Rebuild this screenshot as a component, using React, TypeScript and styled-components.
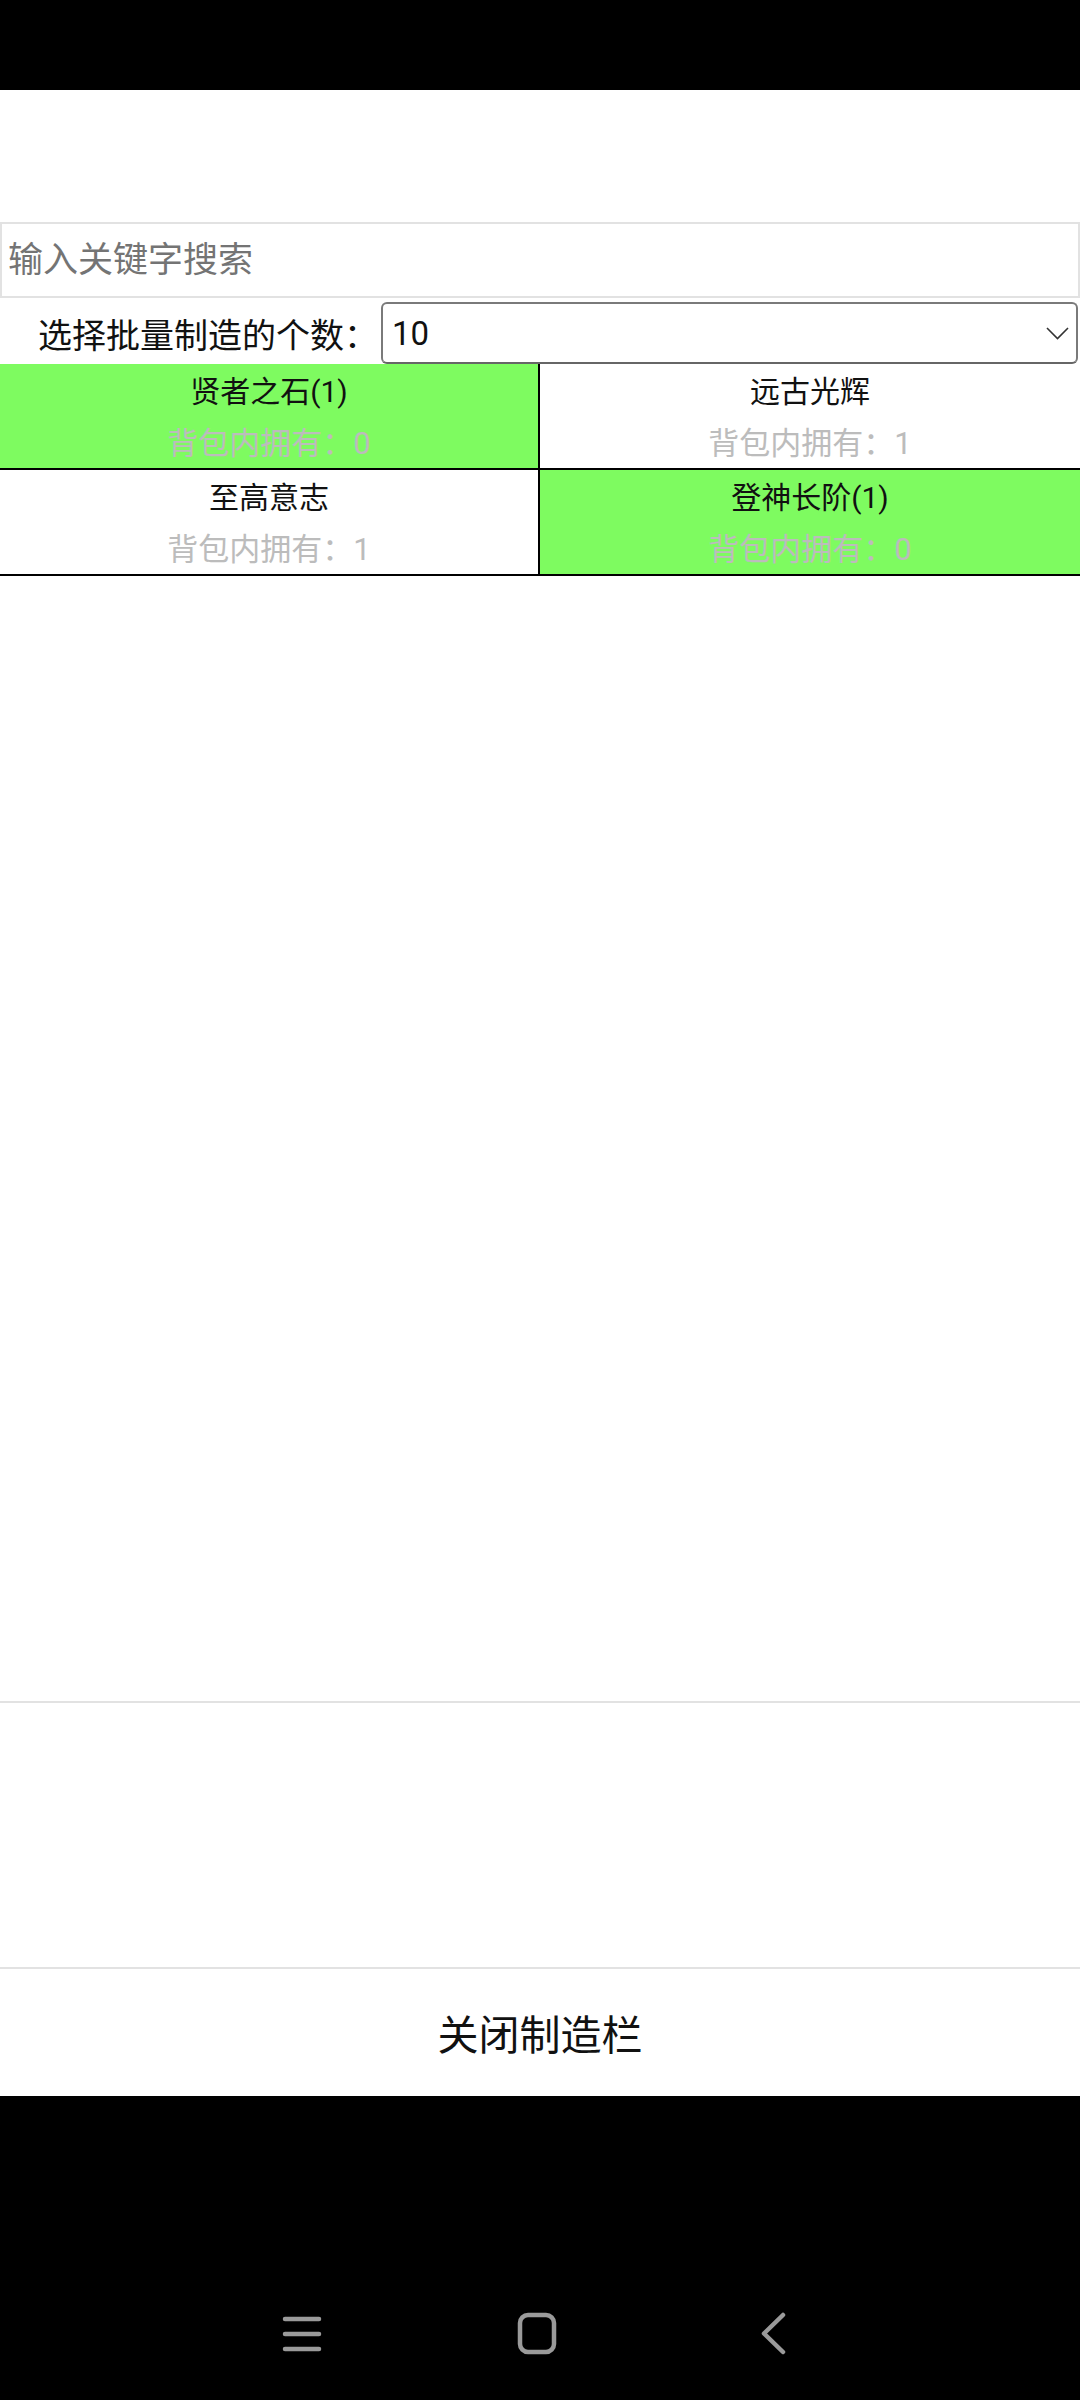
import React from "react";
import styled, { createGlobalStyle } from "styled-components";

const Global = createGlobalStyle`
  html, body { margin: 0; padding: 0; background: #000; }
  body { font-family: Roboto, "Noto Sans CJK SC", sans-serif; }
  * { box-sizing: border-box; }
`;

const Screen = styled.div`
  width: 1080px;
  height: 2400px;
  display: flex;
  flex-direction: column;
  background: #fff;
`;

const StatusBar = styled.div`
  height: 90px;
  background: #000;
  flex: none;
`;

const TopSpace = styled.div`
  height: 132px;
  flex: none;
`;

const SearchInput = styled.input`
  display: block;
  width: 1080px;
  height: 76px;
  margin: 0;
  padding: 0 0 0 6px;
  border: 2px solid #e2e2e2;
  outline: none;
  font-family: Roboto, "Noto Sans CJK SC", sans-serif;
  font-size: 35px;
  color: #222;
  background: #fff;
  &::placeholder { color: #747474; }
`;

const SelectRow = styled.div`
  display: grid;
  grid-template-columns: 381px 1fr;
  align-items: center;
  height: 62px;
  margin-top: 4px;
  flex: none;
`;

const SelectLabel = styled.label`
  font-size: 34px;
  color: #111;
  text-align: right;
  padding-right: 3px;
  white-space: nowrap;
`;

const SelectWrap = styled.div`
  position: relative;
  height: 62px;
  margin-right: 2px;
`;

const Select = styled.select`
  appearance: none;
  width: 100%;
  height: 100%;
  border: 2px solid #7a7a7a;
  border-bottom-color: #666;
  border-radius: 6px;
  background: #fff;
  padding: 0 0 0 9px;
  font-family: Roboto, "Noto Sans CJK SC", sans-serif;
  font-size: 33px;
  color: #111;
  outline: none;
`;

const Chevron = styled.svg`
  position: absolute;
  right: 9px;
  top: 25px;
  pointer-events: none;
`;

const ListArea = styled.div`
  height: 1339px;
  border-bottom: 2px solid #e2e2e2;
  flex: none;
`;

const Grid = styled.div`
  display: grid;
  grid-template-columns: 540px 540px;
`;

const Cell = styled.div<{ $ready: boolean; $right?: boolean }>`
  height: 106px;
  background: ${(p) => (p.$ready ? "#7efb60" : "#fff")};
  border-bottom: 2px solid #000;
  border-right: ${(p) => (p.$right ? "none" : "2px solid #000")};
  display: flex;
  flex-direction: column;
  align-items: center;
  padding-top: 2px;
`;

const CellTitle = styled.div`
  font-size: 30px;
  line-height: 51px;
  color: #111;
`;

const CellCount = styled.div`
  font-size: 31px;
  line-height: 53px;
  color: #bcbcbc;
`;

const EmptyPanel = styled.div`
  height: 266px;
  border-bottom: 2px solid #e2e2e2;
  flex: none;
`;

const CloseButton = styled.button`
  height: 127px;
  width: 100%;
  border: none;
  background: #fff;
  font-family: Roboto, "Noto Sans CJK SC", sans-serif;
  font-size: 41px;
  color: #111;
  padding: 0;
  padding-bottom: 2px;
  flex: none;
`;

const NavBar = styled.div`
  flex: 1;
  background: #000;
  display: flex;
  justify-content: center;
  align-items: flex-start;
  gap: 175px;
  padding-top: 216px;
  padding-right: 6px;
`;

const NavIcon = styled.svg`
  width: 60px;
  height: 44px;
  flex: none;
`;

const items = [
  { name: "贤者之石(1)", count: 0, ready: true },
  { name: "远古光辉", count: 1, ready: false },
  { name: "至高意志", count: 1, ready: false },
  { name: "登神长阶(1)", count: 0, ready: true },
];

export default function App() {
  return (
    <>
      <Global />
      <Screen>
        <StatusBar />
        <TopSpace />
        <SearchInput placeholder="输入关键字搜索" />
        <SelectRow>
          <SelectLabel>选择批量制造的个数：</SelectLabel>
          <SelectWrap>
            <Select defaultValue="10">
              <option value="1">1</option>
              <option value="5">5</option>
              <option value="10">10</option>
            </Select>
            <Chevron width="23" height="13" viewBox="0 0 23 13">
              <path d="M1 1 L11.5 11.5 L22 1" fill="none" stroke="#333" strokeWidth="1.6" />
            </Chevron>
          </SelectWrap>
        </SelectRow>
        <ListArea>
          <Grid>
            {items.map((it, i) => (
              <Cell key={it.name} $ready={it.ready} $right={i % 2 === 1}>
                <CellTitle>{it.name}</CellTitle>
                <CellCount>背包内拥有：{it.count}</CellCount>
              </Cell>
            ))}
          </Grid>
        </ListArea>
        <EmptyPanel />
        <CloseButton>关闭制造栏</CloseButton>
        <NavBar>
          <NavIcon viewBox="0 0 60 44">
            <g stroke="#9a9a9a" strokeWidth="4.5" strokeLinecap="round">
              <line x1="13" y1="7" x2="47" y2="7" />
              <line x1="13" y1="22" x2="47" y2="22" />
              <line x1="13" y1="37" x2="47" y2="37" />
            </g>
          </NavIcon>
          <NavIcon viewBox="0 0 60 44">
            <rect x="13" y="3" width="34" height="37" rx="8" fill="none" stroke="#9a9a9a" strokeWidth="4.5" />
          </NavIcon>
          <NavIcon viewBox="0 0 60 44">
            <path d="M41 3 L22 21.5 L41 40" fill="none" stroke="#9a9a9a" strokeWidth="4.5" strokeLinecap="round" strokeLinejoin="round" />
          </NavIcon>
        </NavBar>
      </Screen>
    </>
  );
}
